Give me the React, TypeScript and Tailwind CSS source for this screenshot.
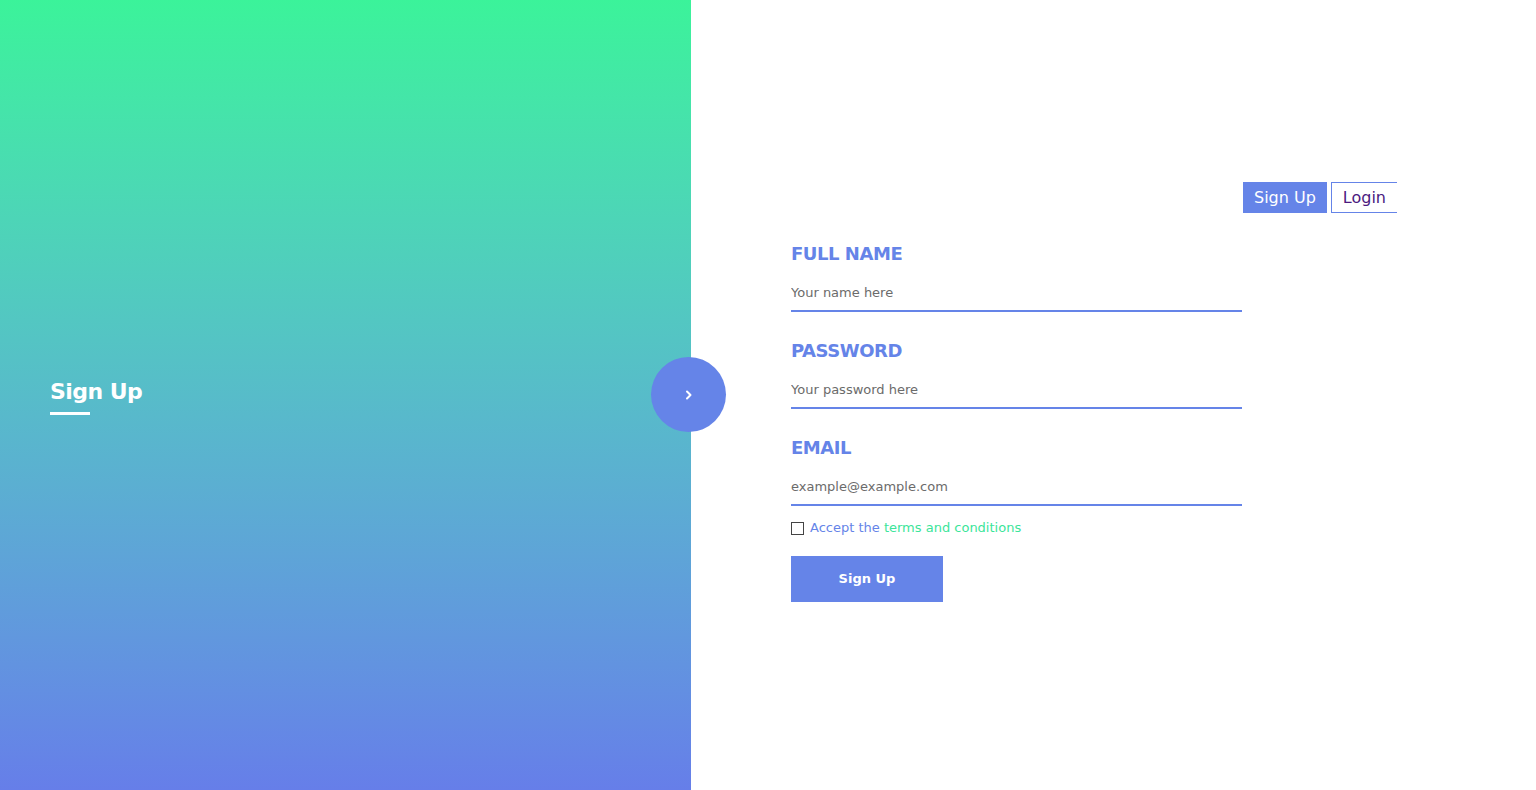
import React from 'react'

const font = { fontFamily: '"DejaVu Sans", "Open Sans", sans-serif' }

const Field = ({ label, placeholder, type = 'text' }: { label: string; placeholder: string; type?: string }) => (
    <div className="flex flex-col">
        <label className="text-[18px] leading-[22px] font-bold text-[#6584e8] tracking-tight">{label}</label>
        <input
            type={type === 'password' ? 'text' : type}
            placeholder={placeholder}
            className="mt-[19px] pb-[8px] pt-0 text-[13px] leading-[18px] text-[#555] placeholder:text-[#6b6b6b] border-b-2 border-[#6584e8] outline-none bg-transparent"
        />
    </div>
)

export default function App() {
    return (
        <div className="relative flex w-full h-[790px] overflow-hidden bg-white" style={font}>
            <div className="w-[691px] h-full flex items-center pl-[50px] bg-gradient-to-b from-[#3bf39a] to-[#667ee9]">
                <div className="flex flex-col mt-[2px]">
                    <h1 className="text-[22px] leading-[28px] font-bold text-white tracking-tight">Sign Up</h1>
                    <div className="w-[40px] h-[3px] bg-white mt-[6px]" />
                </div>
            </div>

            <button className="absolute left-[651px] top-[357px] w-[75px] h-[75px] rounded-full bg-[#6584e8] flex items-center justify-center">
                <svg width="12" height="12" viewBox="0 0 12 12" fill="none">
                    <path d="M4 2.5 L7.5 6 L4 9.5" stroke="white" strokeWidth="2" strokeLinecap="round" strokeLinejoin="round" />
                </svg>
            </button>

            <div className="flex-1 pt-[182px] pl-[100px] pr-[139px]">
                <div className="flex justify-end gap-[4px]">
                    <button className="h-[31px] px-[11px] bg-[#6584e8] text-white text-[16px]">Sign Up</button>
                    <button className="h-[31px] px-[11px] border border-r-0 border-[#6584e8] text-[#4b1a7f] text-[16px]">Login</button>
                </div>

                <form className="w-[451px] mt-[30px] flex flex-col gap-[28px]">
                    <Field label="FULL NAME" placeholder="Your name here" />
                    <Field label="PASSWORD" placeholder="Your password here" type="password" />
                    <Field label="EMAIL" placeholder="example@example.com" type="email" />
                </form>

                <label className="flex items-center gap-[6px] mt-[13px] text-[13px] leading-[18px]">
                    <span className="w-[13px] h-[13px] border border-[#444] bg-white" />
                    <span className="text-[#6584e8]">Accept the <span className="text-[#3be59a]">terms and conditions</span></span>
                </label>

                <button className="mt-[19px] w-[152px] h-[46px] bg-[#6584e8] text-white text-[13px] font-semibold">Sign Up</button>
            </div>
        </div>
    )
}
